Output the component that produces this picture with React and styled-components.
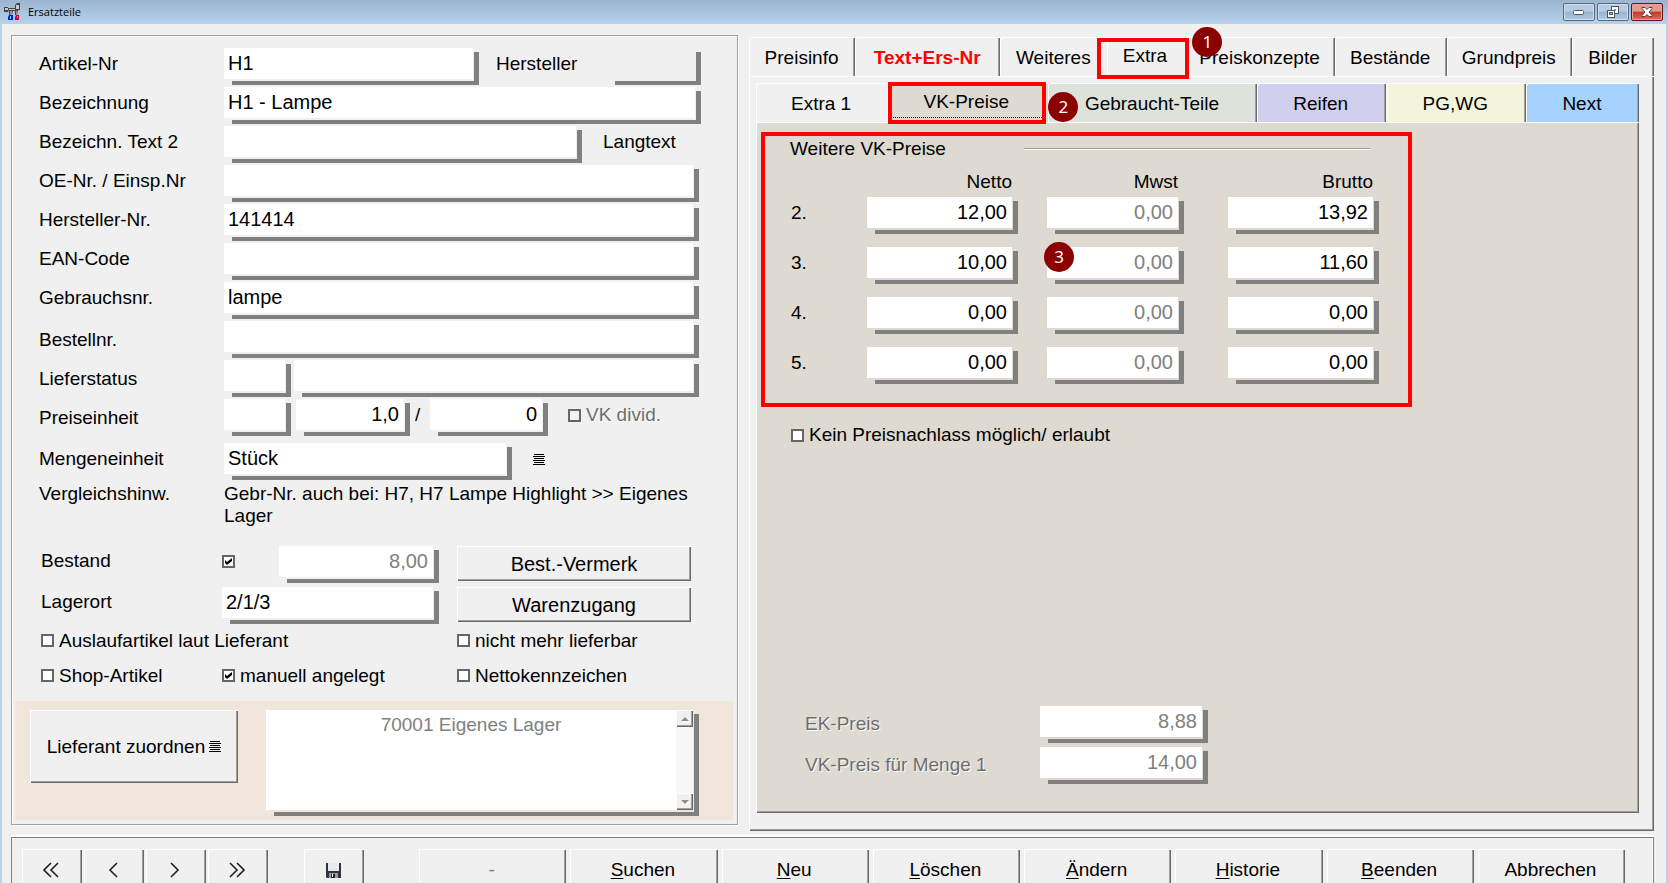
import React from "react";
import styled, { createGlobalStyle, css } from "styled-components";

const GlobalStyle = createGlobalStyle`
  *, *::before, *::after { box-sizing: border-box; }
  body {
    margin: 0;
    background: #f0f0f0;
    color: #000;
    font: 19px/22px "Liberation Sans", Arial, sans-serif;
  }
  button, input, textarea { font: inherit; color: inherit; margin: 0; }
`;

/* ---------- window frame ---------- */

const Window = styled.div`
  display: flex;
  flex-direction: column;
  height: 100vh;
  overflow: hidden;
  background: #f0f0f0;
`;

const TitleBar = styled.header`
  flex: none;
  display: flex;
  align-items: center;
  height: 24px;
  padding: 0 5px 0 4px;
  background: linear-gradient(#9bb5d1, #b8d1eb);
`;

const Title = styled.h1`
  flex: 1;
  margin: 0 0 0 8px;
  font: 11px/16px "Open Sans", "Noto Sans", sans-serif;
`;

const WindowButtons = styled.div`
  display: flex;
  gap: 2px;
`;

const WindowButton = styled.button`
  display: flex;
  align-items: center;
  justify-content: center;
  width: 32px;
  height: 18px;
  padding: 0;
  border: 1px solid ${(p) => (p.$close ? "#5a1420" : "#56697f")};
  border-radius: 2px;
  box-shadow: inset 0 0 0 1px ${(p) => (p.$close ? "#eaa69c" : "#cfdfef")};
  background: ${(p) =>
    p.$close
      ? "linear-gradient(#e39b90 0 45%, #bf3a24 50%, #d9705a)"
      : "linear-gradient(#b7cce2 0 45%, #98b3cf 50%, #b3cae2)"};
`;

const Client = styled.div`
  flex: 1 0 auto;
  display: flex;
  flex-direction: column;
  padding: 11px 12px 0 9px;
  border: 0 solid #b9d1ea;
  border-width: 0 2px;
`;

const Columns = styled.main`
  display: grid;
  grid-template-columns: 727fr 905fr;
  gap: 11px;
`;

/* ---------- shared controls ---------- */

const raised = css`
  border: 0;
  background: #f0f0f0;
  box-shadow: inset 1px 1px #fff, inset -1px -1px #696969,
    inset -2px -2px #a0a0a0;
`;

const FieldFrame = styled.span`
  display: flex;
  flex: ${(p) => (p.$width ? "none" : "1")};
  width: ${(p) => (p.$width ? p.$width + "px" : "auto")};
  height: ${(p) => (p.$tall ? "106px" : "37px")};
  padding: 0 6px 6px 0;
  background: linear-gradient(#808080, #808080) right bottom / calc(100% - 8px)
      4px no-repeat,
    linear-gradient(#808080, #808080) right bottom / 5px calc(100% - 4px)
      no-repeat;
`;

const TextInput = styled.input`
  flex: 1;
  min-width: 0;
  width: 100%;
  height: 31px;
  padding: 0 5px 0 4px;
  border: 0;
  border-radius: 0;
  background: ${(p) => (p.$flat ? "#f0f0f0" : "#fff")};
  font-size: 20px;
  text-align: ${(p) => (p.$right ? "right" : "left")};
  &:disabled { color: #808080; }
`;

function Field({ width, flat, right, ...rest }) {
  return (
    <FieldFrame $width={width}>
      <TextInput type="text" $flat={flat} $right={right} {...rest} />
    </FieldFrame>
  );
}

const Tick = styled.input`
  appearance: none;
  flex: none;
  width: 13px;
  height: 13px;
  border: 2px solid #666;
  background: ${(p) => (p.disabled ? "#f0f0f0" : "#fff")};
  &:checked::before {
    content: "";
    display: block;
    width: 9px;
    height: 9px;
    background: #000;
    clip-path: polygon(1px 3px, 3px 5px, 8px 1px, 8px 4px, 3px 8px, 1px 6px);
  }
`;

const TickLabel = styled.label`
  display: flex;
  align-items: center;
  gap: 5px;
  white-space: nowrap;
  ${(p) => p.$dim && "color: #6d6d6d; text-shadow: 1px 1px #fff;"}
`;

const PushButton = styled.button`
  ${raised}
  height: 35px;
  padding: 0;
  font-size: 20px;
`;

const FlatButton = styled.button`
  display: flex;
  align-items: center;
  padding: 0;
  border: 0;
  background: none;
`;

const Badge = styled.span`
  position: absolute;
  z-index: 2;
  top: ${(p) => p.$top}px;
  left: ${(p) => p.$left};
  display: flex;
  align-items: center;
  justify-content: center;
  width: 30px;
  height: 30px;
  border-radius: 50%;
  background: #8b0000;
  color: #fff;
  font: 17px/20px "Noto Sans", sans-serif;
`;

/* ---------- left: article form ---------- */

const ArticlePanel = styled.form`
  align-self: start;
  margin-bottom: 6px;
  padding: 12px 4px 4px 3px;
  border: 1px solid #a0a0a0;
  box-shadow: 1px 1px #fff, inset 1px 1px #fff;
`;

const FormBody = styled.div`
  padding: 0 32px 0 24px;
`;

const Row = styled.div`
  display: flex;
  height: 39px;
  margin-top: ${(p) => (p.$spaced ? "5px" : "0")};
`;

const Label = styled.label`
  flex: none;
  width: 185px;
  line-height: ${(p) => (p.$low ? "38px" : "32px")};
`;

const Inline = styled.div`
  display: flex;
  align-items: flex-start;
  gap: ${(p) => p.$gap || 0}px;
  flex: 1;
  padding-right: ${(p) => (p.$inset ? 2 : 0)}px;
`;

const Aside = styled.div`
  display: flex;
  align-items: center;
  width: ${(p) => p.$width}px;
  height: 32px;
  padding-left: ${(p) => p.$indent}px;
`;

const Note = styled.div`
  display: flex;
  padding-top: 1px;
  margin-bottom: 19px;
`;

const NoteLabel = styled.span`
  flex: none;
  width: 185px;
`;

const NoteText = styled.p`
  margin: 0;
`;

const StockGrid = styled.div`
  display: grid;
  grid-template-columns: 181px 57px 160px 1fr;
  grid-auto-rows: 41px;
  padding: 0 10px 0 2px;
`;

const StockButton = styled(PushButton)`
  margin-left: 18px;
`;

const StockTick = styled.div`
  display: flex;
  align-items: center;
  height: 31px;
`;

const Wide = styled.div`
  display: flex;
  grid-column: 2 / 4;
`;

const StockLabel = styled.label`
  line-height: 30px;
`;

const FlagGrid = styled.div`
  display: grid;
  grid-template-columns: 181px 235px 1fr;
  row-gap: 10px;
  grid-auto-rows: 25px;
  padding-left: 2px;
`;

const SupplierBox = styled.div`
  display: flex;
  gap: 28px;
  height: 119px;
  margin-top: 13px;
  padding: 9px 34px 0 15px;
  background: #f0e6dc;
`;

const SupplierButton = styled.button`
  ${raised}
  display: flex;
  align-items: center;
  justify-content: center;
  gap: 4px;
  flex: none;
  width: 208px;
  height: 73px;
  padding: 0;
`;

const SupplierText = styled.textarea`
  flex: 1;
  min-width: 0;
  height: 100px;
  padding: 4px 8px;
  border: 0;
  border-radius: 0;
  resize: none;
  overflow: hidden;
  background: #fff;
  text-align: center;
  &:disabled { color: #808080; }
`;

const ScrollBar = styled.span`
  display: flex;
  flex-direction: column;
  justify-content: space-between;
  width: 17px;
  height: 100px;
  background: #f7f7f7;
`;

const ScrollButton = styled.button`
  ${raised}
  display: flex;
  align-items: center;
  justify-content: center;
  height: 17px;
  padding: 0;
`;

/* ---------- right: tabs ---------- */

const TabArea = styled.section`
  display: flex;
  flex-direction: column;
  margin-top: 2px;
`;

const TabStrip = styled.div`
  display: grid;
  grid-template-columns: ${(p) => p.$columns};
  height: 39px;
`;

const Tab = styled.button`
  position: relative;
  display: flex;
  align-items: center;
  justify-content: center;
  padding: ${(p) => (p.$active ? "0 4px 3px 0" : "1px 2px 0 0")};
  border: 0 solid #fff;
  border-width: 1px 0 0 1px;
  border-radius: 3px 0 0 0;
  background: ${(p) => p.$tone || "#f0f0f0"};
  box-shadow: ${(p) =>
    p.$active || p.$last ? "none" : "inset -1px 0 #696969, inset -2px 0 #a0a0a0"};
  color: ${(p) => (p.$alert ? "#f00" : "#000")};
  font-weight: ${(p) => (p.$alert ? "bold" : "normal")};
  white-space: nowrap;
`;

const Marker = styled.span`
  position: absolute;
  z-index: 1;
  inset: ${(p) => p.$inset};
  border: 4px solid #f00;
`;

const FocusLine = styled.span`
  position: absolute;
  right: 6px;
  bottom: 4px;
  left: 5px;
  border-bottom: 1px dotted #000;
`;

const OuterPage = styled.div`
  flex: 1;
  display: flex;
  flex-direction: column;
  padding: 6px 15px 18px 6px;
  border-top: 1px solid #fff;
  border-left: 1px solid #fff;
  box-shadow: inset -1px -1px #696969, inset -2px -2px #a0a0a0;
`;

const InnerPage = styled.div`
  flex: 1;
  display: flex;
  flex-direction: column;
  align-items: flex-start;
  padding: 9px 4px 29px;
  border-top: 1px solid #fff;
  border-left: 1px solid #fff;
  background: #dedad2;
  box-shadow: inset -1px -1px #696969, inset -2px -2px #a0a0a0;
`;

const PriceSection = styled.section`
  width: 651px;
  height: 275px;
  padding: 0 29px 0 25px;
  border: 4px solid #f00;
`;

const SectionHead = styled.div`
  display: flex;
  align-items: center;
  justify-content: space-between;
  height: 25px;
  padding-right: 9px;
`;

const SectionTitle = styled.h2`
  margin: 0;
  font-size: 19px;
  font-weight: normal;
`;

const Rule = styled.span`
  width: 346px;
  height: 2px;
  background: linear-gradient(#a0a0a0 50%, #fff 50%);
`;

const PriceTable = styled.table`
  width: 589px;
  margin-top: 7px;
  border-collapse: collapse;
  table-layout: fixed;
`;

const HeadCell = styled.th`
  width: ${(p) => p.$width}px;
  height: 29px;
  padding: 0 6px 0 0;
  font-weight: normal;
  text-align: right;
  vertical-align: top;
  line-height: 28px;
`;

const RowHead = styled.th`
  padding: 0 0 0 1px;
  font-weight: normal;
  text-align: left;
  vertical-align: top;
  line-height: 32px;
`;

const PriceCell = styled.td`
  position: relative;
  height: 50px;
  padding: 0 0 0 ${(p) => p.$indent}px;
  vertical-align: top;
`;

const DiscountRow = styled.div`
  margin: 17px 0 0 30px;
`;

const Totals = styled.div`
  display: grid;
  grid-template-columns: 235px 168px;
  row-gap: 4px;
  margin: auto 0 0 44px;
`;

const TotalLabel = styled.label`
  color: #6d6d6d;
  text-shadow: 1px 1px #fff;
  line-height: 36px;
`;

/* ---------- bottom bar ---------- */

const ActionBar = styled.nav`
  display: flex;
  margin-top: 6px;
  padding: 11px 28px 12px 10px;
  border: 1px solid #808080;
  box-shadow: 0 -2px #fff, inset -1px 0 #fff;
`;

const NavGroup = styled.div`
  display: flex;
  gap: 2px;
  margin-right: ${(p) => p.$after}px;
`;

const NavButton = styled.button`
  ${raised}
  display: flex;
  align-items: center;
  justify-content: center;
  width: 60px;
  height: 42px;
  padding: 0 2px 0 0;
`;

const Actions = styled.div`
  flex: 1;
  display: grid;
  grid-template-columns: repeat(8, 1fr);
  gap: 4px;
`;

const ActionButton = styled.button`
  ${raised}
  height: 42px;
  padding: 0 2px 0 0;
  &:disabled { color: #808080; }
`;

const Key = styled.u`
  text-underline-offset: 2px;
`;

/* ---------- icons ---------- */

const AppIcon = () => (
  <svg width="16" height="18" viewBox="0 0 16 18" aria-hidden="true">
    <path d="M0 4h4v1h7V2l2-2h3v7h-2l-1 5h-2V8H9l-1 4H5V7L4 9H0z" fill="#444" />
    <path d="M1 5h3v2H1zM5 6h6v1H5zM12 2h3v4h-3z" fill="#c9c9c9" />
    <path d="M6 8h2v4H6zM12 8h1v4h-1z" fill="#999" />
    <path d="M5 12h4v5H4v-3z" fill="#0022c8" />
    <path d="M6 13h1v3H6z" fill="#5ac8ff" />
    <path d="M12 12h3v5h-4v-3z" fill="#c4003c" />
    <path d="M13 13h1v2h-1z" fill="#ff7aa8" />
  </svg>
);

const MinimizeIcon = () => (
  <svg width="12" height="6" viewBox="0 0 12 6" aria-hidden="true">
    <rect x="0.500" y="1.500" width="10" height="4" rx="1" fill="#fff" stroke="#4a5666" />
  </svg>
);

const RestoreIcon = () => (
  <svg width="12" height="12" viewBox="0 0 12 12" aria-hidden="true">
    <g fill="#fff" stroke="#4a5666">
      <rect x="4.500" y="0.500" width="7" height="7" />
      <path d="M7.500 3.500h1v1" fill="none" />
      <rect x="0.500" y="4.500" width="7" height="7" />
      <rect x="2.500" y="6.500" width="3" height="2" fill="#a9c0d8" />
    </g>
  </svg>
);

const CloseIcon = () => (
  <svg width="12" height="10" viewBox="0 0 12 10" aria-hidden="true">
    <path
      d="M1 0.500h3l2 2 2-2h3v1l-3 3.500 3 3.500v1H8l-2-2-2 2H1v-1l3-3.500L1 1.500z"
      fill="#fff"
      stroke="#54404a"
    />
  </svg>
);

const ListIcon = () => (
  <svg width="12" height="11" viewBox="0 0 12 11" aria-hidden="true">
    <path
      d="M1 0.500h10M0 2.500h12M1 4.500h10M0 6.500h12M1 8.500h10M0 10.500h12"
      stroke="#000"
    />
  </svg>
);

const chevrons = {
  first: "M8 1L1 8l7 7M15 1L8 8l7 7",
  previous: "M12 1L5 8l7 7",
  next: "M4 1l7 7-7 7",
  last: "M1 1l7 7-7 7M8 1l7 7-7 7",
};

const ChevronIcon = ({ kind }) => (
  <svg width="16" height="16" viewBox="0 0 16 16" aria-hidden="true">
    <path d={chevrons[kind]} fill="none" stroke="#222" strokeWidth="1.600" />
  </svg>
);

const SaveIcon = () => (
  <svg width="15" height="15" viewBox="0 0 15 15" aria-hidden="true">
    <path d="M0 0h15v15H1l-1-1z" fill="#2f3440" />
    <path d="M2 0h11v8H2z" fill="#e6ebf0" />
    <path d="M3 10h9v5H3z" fill="#9b9b9b" />
    <path d="M5 11h4v4H5z" fill="#1e222b" />
    <path d="M6 11h1v3H6z" fill="#fff" />
  </svg>
);

const ArrowIcon = ({ down }) => (
  <svg width="8" height="6" viewBox="0 0 8 6" aria-hidden="true">
    <path d={down ? "M1 2h8L5 6z" : "M1 6h8L5 2z"} fill="#fff" />
    <path d={down ? "M0 1h8L4 5z" : "M0 5h8L4 1z"} fill="#8c8c8c" />
  </svg>
);

/* ---------- data ---------- */

const plainRows = [
  { id: "oe", label: "OE-Nr. / Einsp.Nr", value: "" },
  { id: "herstellerNr", label: "Hersteller-Nr.", value: "141414" },
  { id: "ean", label: "EAN-Code", value: "" },
  { id: "gebrauchsnr", label: "Gebrauchsnr.", value: "lampe" },
  { id: "bestellnr", label: "Bestellnr.", value: "", low: true },
];

const prices = [
  ["2.", "12,00", "0,00", "13,92"],
  ["3.", "10,00", "0,00", "11,60"],
  ["4.", "0,00", "0,00", "0,00"],
  ["5.", "0,00", "0,00", "0,00"],
];

const actions = [
  ["S", "uchen"],
  ["N", "eu"],
  ["L", "öschen"],
  ["Ä", "ndern"],
  ["H", "istorie"],
  ["B", "eenden"],
];

function ArticleForm() {
  return (
    <ArticlePanel>
      <FormBody>
        <Row>
          <Label htmlFor="artikel">Artikel-Nr</Label>
          <Inline>
            <Field id="artikel" defaultValue="H1" />
            <Aside as="label" htmlFor="hersteller" $indent={17} $width={128}>
              Hersteller
            </Aside>
            <Field id="hersteller" width={94} flat />
          </Inline>
        </Row>
        <Row>
          <Label htmlFor="bezeichnung">Bezeichnung</Label>
          <Inline>
            <Field id="bezeichnung" defaultValue="H1 - Lampe" />
          </Inline>
        </Row>
        <Row>
          <Label htmlFor="text2">Bezeichn. Text 2</Label>
          <Inline>
            <Field id="text2" />
            <Aside $indent={21} $width={119}>
              <FlatButton type="button">Langtext</FlatButton>
            </Aside>
          </Inline>
        </Row>
        {plainRows.map(({ id, label, value, low }) => (
          <Row key={id}>
            <Label htmlFor={id} $low={low}>{label}</Label>
            <Inline $inset>
              <Field id={id} defaultValue={value} />
            </Inline>
          </Row>
        ))}
        <Row>
          <Label htmlFor="lieferstatus" $low>Lieferstatus</Label>
          <Inline $inset $gap={3}>
            <Field id="lieferstatus" width={67} />
            <Field aria-label="Lieferstatus Text" />
          </Inline>
        </Row>
        <Row>
          <Label htmlFor="preiseinheit" $low>Preiseinheit</Label>
          <Inline $inset $gap={5}>
            <Field id="preiseinheit" width={67} />
            <Field aria-label="Menge" width={114} right defaultValue="1,0" />
            <Aside $indent={0} $width={10}>/</Aside>
            <Field aria-label="Teiler" right defaultValue="0" />
            <Aside $indent={15} $width={146}>
              <TickLabel $dim>
                <Tick type="checkbox" disabled />
                VK divid.
              </TickLabel>
            </Aside>
          </Inline>
        </Row>
        <Row $spaced>
          <Label htmlFor="mengeneinheit">Mengeneinheit</Label>
          <Inline>
            <Field id="mengeneinheit" defaultValue="Stück" />
            <Aside $indent={21} $width={189}>
              <FlatButton type="button" aria-label="Mengeneinheit wählen">
                <ListIcon />
              </FlatButton>
            </Aside>
          </Inline>
        </Row>
        <Note>
          <NoteLabel>Vergleichshinw.</NoteLabel>
          <NoteText>
            Gebr-Nr. auch bei: H7, H7 Lampe Highlight &gt;&gt; Eigenes Lager
          </NoteText>
        </Note>
        <StockGrid>
          <StockLabel htmlFor="bestand">Bestand</StockLabel>
          <StockTick>
            <Tick type="checkbox" defaultChecked aria-label="Bestand führen" />
          </StockTick>
          <Field id="bestand" right disabled defaultValue="8,00" />
          <StockButton type="button">Best.-Vermerk</StockButton>
          <StockLabel htmlFor="lagerort">Lagerort</StockLabel>
          <Wide>
            <Field id="lagerort" defaultValue="2/1/3" />
          </Wide>
          <StockButton type="button">Warenzugang</StockButton>
        </StockGrid>
        <FlagGrid>
          <TickLabel>
            <Tick type="checkbox" />
            Auslaufartikel laut Lieferant
          </TickLabel>
          <span />
          <TickLabel>
            <Tick type="checkbox" />
            nicht mehr lieferbar
          </TickLabel>
          <TickLabel>
            <Tick type="checkbox" />
            Shop-Artikel
          </TickLabel>
          <TickLabel>
            <Tick type="checkbox" defaultChecked />
            manuell angelegt
          </TickLabel>
          <TickLabel>
            <Tick type="checkbox" />
            Nettokennzeichen
          </TickLabel>
        </FlagGrid>
      </FormBody>
      <SupplierBox>
        <SupplierButton type="button">
          Lieferant zuordnen
          <ListIcon />
        </SupplierButton>
        <FieldFrame $tall>
          <SupplierText
            aria-label="Lieferant"
            disabled
            defaultValue="70001 Eigenes Lager"
          />
          <ScrollBar>
            <ScrollButton type="button" aria-label="Nach oben">
              <ArrowIcon />
            </ScrollButton>
            <ScrollButton type="button" aria-label="Nach unten">
              <ArrowIcon down />
            </ScrollButton>
          </ScrollBar>
        </FieldFrame>
      </SupplierBox>
    </ArticlePanel>
  );
}

function ExtraTabs() {
  return (
    <TabArea>
      <TabStrip
        role="tablist"
        $columns="106fr 145fr 107fr 78fr 149fr 112fr 125fr 82fr"
      >
        <Tab role="tab">Preisinfo</Tab>
        <Tab role="tab" $alert>Text+Ers-Nr</Tab>
        <Tab role="tab" $last>Weiteres</Tab>
        <Tab role="tab" aria-selected="true" $active>
          Extra
          <Marker $inset="0 -4px -3px -11px" />
          <Badge $top={-11} $left="calc(100% + 7px)">1</Badge>
        </Tab>
        <Tab role="tab">Preiskonzepte</Tab>
        <Tab role="tab">Bestände</Tab>
        <Tab role="tab">Grundpreis</Tab>
        <Tab role="tab">Bilder</Tab>
      </TabStrip>
      <OuterPage role="tabpanel">
        <TabStrip role="tablist" $columns="131fr 161fr 208fr 129fr 140fr 113fr">
          <Tab role="tab" $last>Extra 1</Tab>
          <Tab role="tab" aria-selected="true" $active $tone="#dedad2">
            VK-Preise
            <FocusLine />
            <Marker $inset="-2px 2px -2px 0" />
            <Badge $top={8} $left="100%">2</Badge>
          </Tab>
          <Tab role="tab" $tone="#dde3da">Gebraucht-Teile</Tab>
          <Tab role="tab" $tone="#d0d0ee">Reifen</Tab>
          <Tab role="tab" $tone="#f4f4dc">PG,WG</Tab>
          <Tab role="tab" $tone="#a6d2ff">Next</Tab>
        </TabStrip>
        <InnerPage role="tabpanel">
          <PriceSection>
            <SectionHead>
              <SectionTitle>Weitere VK-Preise</SectionTitle>
              <Rule />
            </SectionHead>
            <PriceTable>
              <thead>
                <tr>
                  <HeadCell $width={77} aria-label="Nr." />
                  <HeadCell $width={151} scope="col">Netto</HeadCell>
                  <HeadCell $width={166} scope="col">Mwst</HeadCell>
                  <HeadCell $width={195} scope="col">Brutto</HeadCell>
                </tr>
              </thead>
              <tbody>
                {prices.map(([nr, netto, mwst, brutto]) => (
                  <tr key={nr}>
                    <RowHead scope="row">{nr}</RowHead>
                    <PriceCell $indent={0}>
                      <Field aria-label={`Netto ${nr}`} right defaultValue={netto} />
                    </PriceCell>
                    <PriceCell $indent={29}>
                      <Field
                        aria-label={`Mwst ${nr}`}
                        right
                        disabled
                        defaultValue={mwst}
                      />
                      {nr === "3." && <Badge $top={-5} $left="26px">3</Badge>}
                    </PriceCell>
                    <PriceCell $indent={44}>
                      <Field aria-label={`Brutto ${nr}`} right defaultValue={brutto} />
                    </PriceCell>
                  </tr>
                ))}
              </tbody>
            </PriceTable>
          </PriceSection>
          <DiscountRow>
            <TickLabel>
              <Tick type="checkbox" />
              Kein Preisnachlass möglich/ erlaubt
            </TickLabel>
          </DiscountRow>
          <Totals>
            <TotalLabel htmlFor="ek">EK-Preis</TotalLabel>
            <Field id="ek" right disabled defaultValue="8,88" />
            <TotalLabel htmlFor="vk">VK-Preis für Menge 1</TotalLabel>
            <Field id="vk" right disabled defaultValue="14,00" />
          </Totals>
        </InnerPage>
      </OuterPage>
    </TabArea>
  );
}

export default function App() {
  return (
    <Window>
      <GlobalStyle />
      <TitleBar>
        <AppIcon />
        <Title>Ersatzteile</Title>
        <WindowButtons>
          <WindowButton aria-label="Minimieren"><MinimizeIcon /></WindowButton>
          <WindowButton aria-label="Wiederherstellen"><RestoreIcon /></WindowButton>
          <WindowButton aria-label="Schließen" $close><CloseIcon /></WindowButton>
        </WindowButtons>
      </TitleBar>
      <Client>
        <Columns>
          <ArticleForm />
          <ExtraTabs />
        </Columns>
        <ActionBar>
          <NavGroup $after={36}>
            <NavButton aria-label="Erster"><ChevronIcon kind="first" /></NavButton>
            <NavButton aria-label="Zurück"><ChevronIcon kind="previous" /></NavButton>
            <NavButton aria-label="Weiter"><ChevronIcon kind="next" /></NavButton>
            <NavButton aria-label="Letzter"><ChevronIcon kind="last" /></NavButton>
          </NavGroup>
          <NavGroup $after={55}>
            <NavButton aria-label="Speichern"><SaveIcon /></NavButton>
          </NavGroup>
          <Actions>
            <ActionButton disabled>-</ActionButton>
            {actions.map(([key, rest]) => (
              <ActionButton key={rest}>
                <Key>{key}</Key>
                {rest}
              </ActionButton>
            ))}
            <ActionButton>Abbrechen</ActionButton>
          </Actions>
        </ActionBar>
      </Client>
    </Window>
  );
}
